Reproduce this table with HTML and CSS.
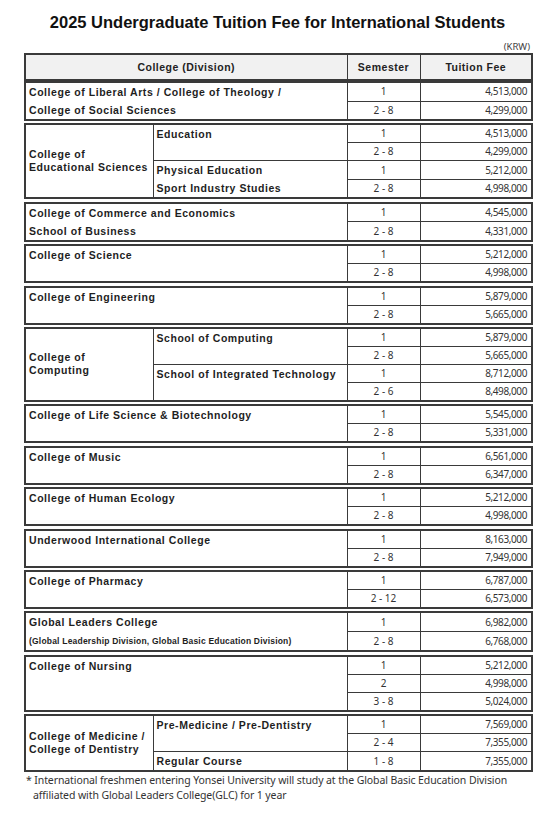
FILE: index.html
```html
<!DOCTYPE html>
<html>
<head>
<meta charset="utf-8">
<link rel="stylesheet" href="styles.css">
</head>
<body>
<div class="page">
  <h1 class="title">2025 Undergraduate Tuition Fee for International Students</h1>
  <div class="unit">(KRW)</div>

  <table class="grp head">
    <colgroup><col class="w1"><col class="w2"><col class="w3"><col class="w4"></colgroup>
    <tr><th colspan="2">College (Division)</th><th>Semester</th><th>Tuition Fee</th></tr>
  </table>

  <table class="grp first">
    <colgroup><col class="w1"><col class="w2"><col class="w3"><col class="w4"></colgroup>
    <tr><td class="c" colspan="2" rowspan="2">College of Liberal Arts / College of Theology /<br>College of Social Sciences</td><td class="s">1</td><td class="f">4,513,000</td></tr>
    <tr><td class="s">2 - 8</td><td class="f">4,299,000</td></tr>
  </table>

  <table class="grp">
    <colgroup><col class="w1"><col class="w2"><col class="w3"><col class="w4"></colgroup>
    <tr><td class="c mid" rowspan="4">College of<br>Educational Sciences</td><td class="c" rowspan="2">Education</td><td class="s">1</td><td class="f">4,513,000</td></tr>
    <tr><td class="s">2 - 8</td><td class="f">4,299,000</td></tr>
    <tr><td class="c" rowspan="2">Physical Education<br>Sport Industry Studies</td><td class="s">1</td><td class="f">5,212,000</td></tr>
    <tr><td class="s">2 - 8</td><td class="f">4,998,000</td></tr>
  </table>

  <table class="grp">
    <colgroup><col class="w1"><col class="w2"><col class="w3"><col class="w4"></colgroup>
    <tr><td class="c" colspan="2" rowspan="2">College of Commerce and Economics<br>School of Business</td><td class="s">1</td><td class="f">4,545,000</td></tr>
    <tr><td class="s">2 - 8</td><td class="f">4,331,000</td></tr>
  </table>

  <table class="grp">
    <colgroup><col class="w1"><col class="w2"><col class="w3"><col class="w4"></colgroup>
    <tr><td class="c" colspan="2" rowspan="2">College of Science</td><td class="s">1</td><td class="f">5,212,000</td></tr>
    <tr><td class="s">2 - 8</td><td class="f">4,998,000</td></tr>
  </table>

  <table class="grp">
    <colgroup><col class="w1"><col class="w2"><col class="w3"><col class="w4"></colgroup>
    <tr><td class="c" colspan="2" rowspan="2">College of Engineering</td><td class="s">1</td><td class="f">5,879,000</td></tr>
    <tr><td class="s">2 - 8</td><td class="f">5,665,000</td></tr>
  </table>

  <table class="grp">
    <colgroup><col class="w1"><col class="w2"><col class="w3"><col class="w4"></colgroup>
    <tr><td class="c mid" rowspan="4">College of<br>Computing</td><td class="c" rowspan="2">School of Computing</td><td class="s">1</td><td class="f">5,879,000</td></tr>
    <tr><td class="s">2 - 8</td><td class="f">5,665,000</td></tr>
    <tr><td class="c" rowspan="2">School of Integrated Technology</td><td class="s">1</td><td class="f">8,712,000</td></tr>
    <tr><td class="s">2 - 6</td><td class="f">8,498,000</td></tr>
  </table>

  <table class="grp">
    <colgroup><col class="w1"><col class="w2"><col class="w3"><col class="w4"></colgroup>
    <tr><td class="c" colspan="2" rowspan="2">College of Life Science &amp; Biotechnology</td><td class="s">1</td><td class="f">5,545,000</td></tr>
    <tr><td class="s">2 - 8</td><td class="f">5,331,000</td></tr>
  </table>

  <table class="grp">
    <colgroup><col class="w1"><col class="w2"><col class="w3"><col class="w4"></colgroup>
    <tr><td class="c" colspan="2" rowspan="2">College of Music</td><td class="s">1</td><td class="f">6,561,000</td></tr>
    <tr><td class="s">2 - 8</td><td class="f">6,347,000</td></tr>
  </table>

  <table class="grp">
    <colgroup><col class="w1"><col class="w2"><col class="w3"><col class="w4"></colgroup>
    <tr><td class="c" colspan="2" rowspan="2">College of Human Ecology</td><td class="s">1</td><td class="f">5,212,000</td></tr>
    <tr><td class="s">2 - 8</td><td class="f">4,998,000</td></tr>
  </table>

  <table class="grp">
    <colgroup><col class="w1"><col class="w2"><col class="w3"><col class="w4"></colgroup>
    <tr><td class="c" colspan="2" rowspan="2">Underwood International College</td><td class="s">1</td><td class="f">8,163,000</td></tr>
    <tr><td class="s">2 - 8</td><td class="f">7,949,000</td></tr>
  </table>

  <table class="grp">
    <colgroup><col class="w1"><col class="w2"><col class="w3"><col class="w4"></colgroup>
    <tr><td class="c" colspan="2" rowspan="2">College of Pharmacy</td><td class="s">1</td><td class="f">6,787,000</td></tr>
    <tr><td class="s">2 - 12</td><td class="f">6,573,000</td></tr>
  </table>

  <table class="grp">
    <colgroup><col class="w1"><col class="w2"><col class="w3"><col class="w4"></colgroup>
    <tr><td class="c" colspan="2" rowspan="2">Global Leaders College<br><span class="small">(Global Leadership Division, Global Basic Education Division)</span></td><td class="s">1</td><td class="f">6,982,000</td></tr>
    <tr><td class="s">2 - 8</td><td class="f">6,768,000</td></tr>
  </table>

  <table class="grp">
    <colgroup><col class="w1"><col class="w2"><col class="w3"><col class="w4"></colgroup>
    <tr><td class="c" colspan="2" rowspan="3">College of Nursing</td><td class="s">1</td><td class="f">5,212,000</td></tr>
    <tr><td class="s">2</td><td class="f">4,998,000</td></tr>
    <tr><td class="s">3 - 8</td><td class="f">5,024,000</td></tr>
  </table>

  <table class="grp">
    <colgroup><col class="w1"><col class="w2"><col class="w3"><col class="w4"></colgroup>
    <tr><td class="c mid" rowspan="3">College of Medicine /<br>College of Dentistry</td><td class="c" rowspan="2">Pre-Medicine / Pre-Dentistry</td><td class="s">1</td><td class="f">7,569,000</td></tr>
    <tr><td class="s">2 - 4</td><td class="f">7,355,000</td></tr>
    <tr><td class="c">Regular Course</td><td class="s">1 - 8</td><td class="f">7,355,000</td></tr>
  </table>

  <p class="note">* International freshmen entering Yonsei University will study at the Global Basic Education Division<br><span class="indent">affiliated with Global Leaders College(GLC) for 1 year</span></p>
</div>
</body>
</html>
```

FILE: styles.css
```css
body {
  margin: 0;
  background: #ffffff;
  color: #1a1a1a;
}

.page {
  width: 507px;
  margin-left: 24px;
  padding-top: 12px;
}

.title {
  margin: 0;
  font-family: "Liberation Sans", Arial, sans-serif;
  font-weight: bold;
  font-size: 16.5px;
  line-height: 20px;
  text-align: center;
  color: #111;
}

.unit {
  text-align: right;
  font-family: "Noto Sans", sans-serif;
  font-size: 9.5px;
  line-height: 12px;
  color: #444;
  margin-top: 9px;
  padding-right: 1px;
}

table.grp {
  width: 507px;
  table-layout: fixed;
  border-collapse: collapse;
  border: 2px solid #3a3a3a;
  margin-top: 2.4px;
}

table.head {
  margin-top: 0;
}

table.first {
  margin-top: 0;
}

.w1 { width: 128px; }
.w2 { width: 194px; }
.w3 { width: 73px; }
.w4 { width: 112px; }

.grp th {
  background: #f1f1f1;
  border: 1px solid #3a3a3a;
  height: 24px;
  padding: 0;
  font-family: "Liberation Sans", Arial, sans-serif;
  font-weight: bold;
  font-size: 10.5px;
  letter-spacing: 0.5px;
  color: #222;
  text-align: center;
  vertical-align: middle;
}

.grp td {
  border: 1px solid #3a3a3a;
  height: 17px;
  padding: 0 3px;
  line-height: 17px;
  font-size: 10px;
  vertical-align: top;
  white-space: nowrap;
  overflow: hidden;
}

.c {
  font-family: "Liberation Sans", Arial, sans-serif;
  font-weight: bold;
  font-size: 10.5px !important;
  letter-spacing: 0.55px;
  color: #1e1e1e;
  text-align: left;
  line-height: 18px !important;
}

.c.mid {
  vertical-align: middle !important;
  line-height: 13px !important;
}

.s {
  font-family: "Noto Sans", sans-serif;
  color: #333;
  text-align: center;
  vertical-align: middle !important;
}

.f {
  font-family: "Noto Sans", sans-serif;
  color: #333;
  text-align: right;
  letter-spacing: -0.4px;
  vertical-align: middle !important;
  padding-right: 4px !important;
}

.small {
  font-size: 8.5px;
  letter-spacing: 0.2px;
}

.note {
  margin: 1px 0 0 2px;
  font-family: "Noto Sans", sans-serif;
  font-size: 10.5px;
  line-height: 15px;
  color: #333;
  letter-spacing: -0.1px;
}

.indent {
  padding-left: 7px;
}
```
